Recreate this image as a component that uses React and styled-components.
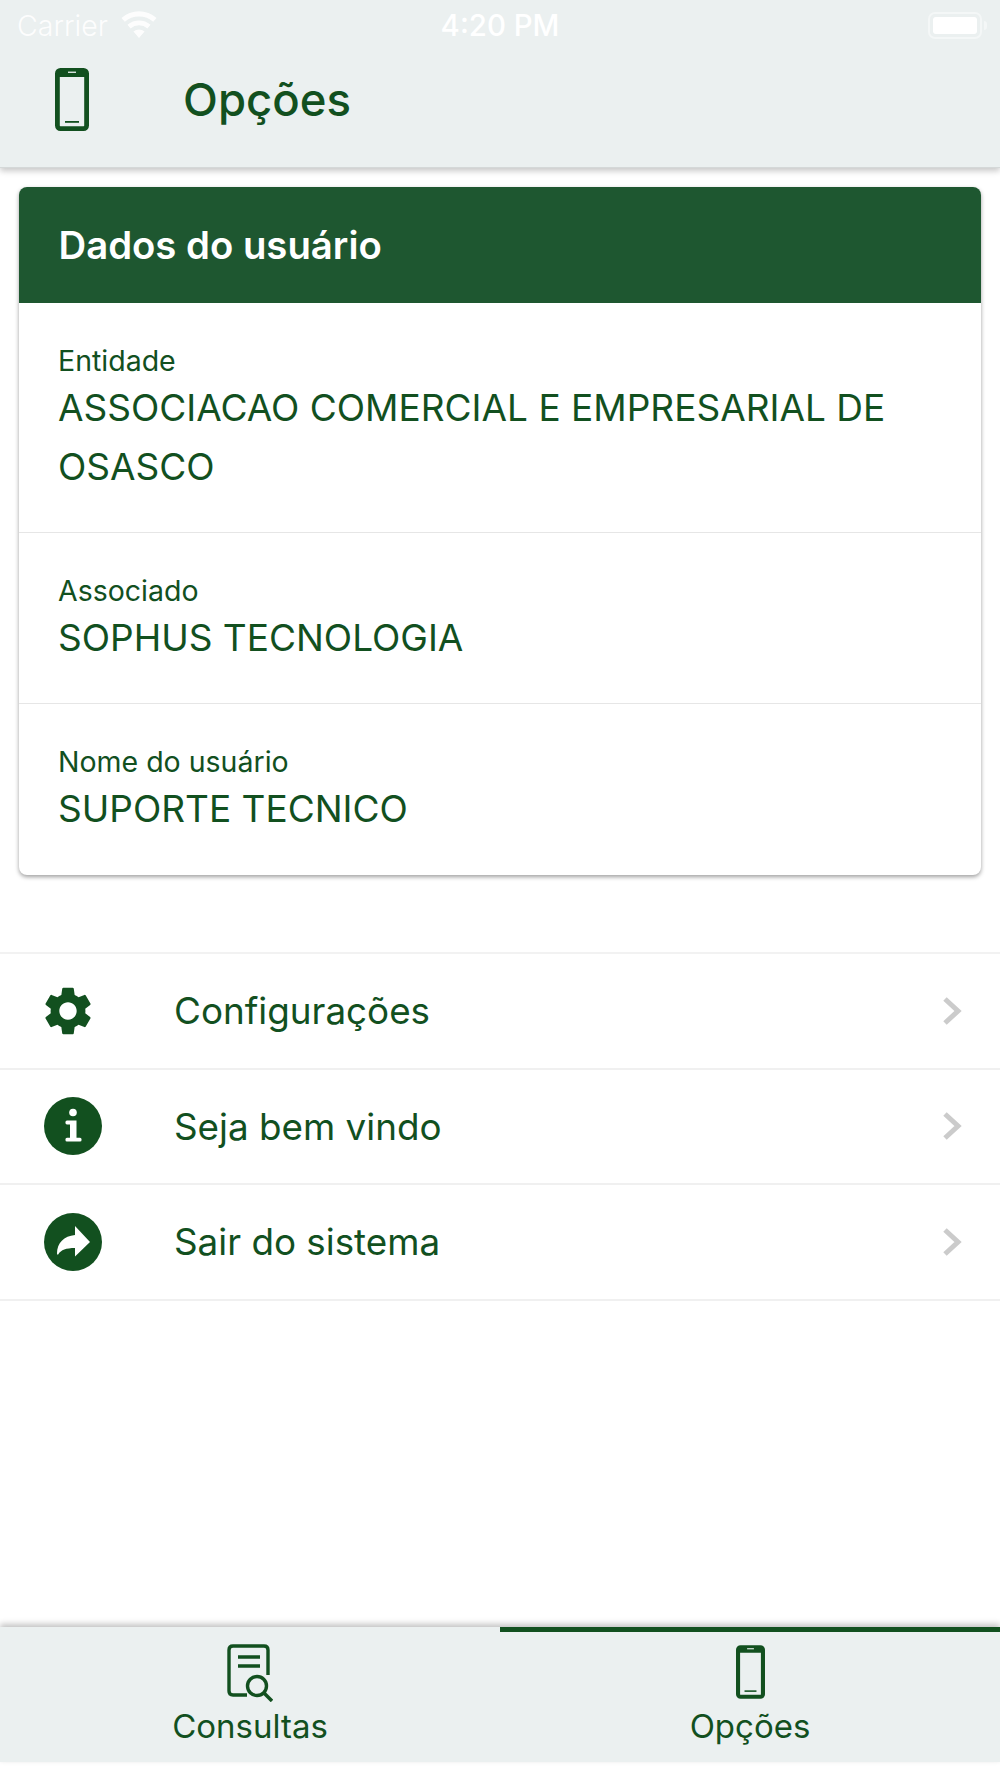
import React from "react";
import styled, { createGlobalStyle } from "styled-components";
import { MdSettings } from "react-icons/md";

const GREEN = "#12501f";

const GlobalStyle = createGlobalStyle`
  html, body {
    margin: 0;
    padding: 0;
    background: #fff;
    font-family: Inter, "Liberation Sans", sans-serif;
    color: ${GREEN};
  }
  * { box-sizing: border-box; }
`;

const Page = styled.div`
  width: 1000px;
  height: 1778px;
  display: flex;
  flex-direction: column;
  background: #fff;
`;

const Header = styled.header`
  height: 168px;
  flex: none;
  display: flex;
  flex-direction: column;
  background: #ebf0f0;
  border-bottom: 1px solid #d4d8d8;
  box-shadow: 0 3px 6px rgba(0, 0, 0, 0.22);
  position: relative;
`;

const StatusBar = styled.div`
  height: 50px;
  padding: 0 13px;
  display: grid;
  grid-template-columns: 1fr auto 1fr;
  align-items: center;
  color: #fff;
  font-size: 28.5px;
`;

const Carrier = styled.div`
  display: flex;
  align-items: center;
  gap: 12px;
  padding-left: 4px;
  font-weight: 300;
  opacity: 0.9;
`;

const Clock = styled.div`
  font-weight: 500;
  font-size: 29.4px;
`;

const Battery = styled.div`
  justify-self: end;
  display: flex;
  align-items: center;
  gap: 2px;
`;

const BatteryBody = styled.div`
  width: 54px;
  height: 27px;
  padding: 3px;
  border: 2px solid rgba(255, 255, 255, 0.45);
  border-radius: 7px;
  &::before {
    content: "";
    display: block;
    height: 100%;
    background: #fff;
    border-radius: 3px;
  }
`;

const BatteryCap = styled.div`
  width: 3px;
  height: 9px;
  background: rgba(255, 255, 255, 0.45);
  border-radius: 0 3px 3px 0;
`;

const TitleRow = styled.div`
  flex: 1;
  display: flex;
  align-items: center;
  padding: 0 0 19px 55px;
  gap: 94px;
`;

const Title = styled.h1`
  margin: 0;
  font-size: 45.5px;
  font-weight: 500;
  line-height: 1;
  position: relative;
  top: 1px;
`;

const Main = styled.main`
  flex: 1;
  display: flex;
  flex-direction: column;
  padding-top: 19px;
`;

const Card = styled.section`
  margin: 0 19px;
  border-radius: 8px;
  background: #fff;
  box-shadow: 0 2px 4px rgba(0, 0, 0, 0.38);
`;

const CardHeader = styled.h2`
  margin: 0;
  height: 116px;
  padding-left: 39.5px;
  display: flex;
  align-items: center;
  background: #1e5730;
  border-radius: 8px 8px 0 0;
  color: #fff;
  font-size: 38.3px;
  font-weight: 600;
`;

const Field = styled.div`
  padding: 41px 39px 36px;
  & + & {
    border-top: 1px solid #e6e6e6;
  }
  &:last-child {
    padding-bottom: 37px;
  }
`;

const FieldLabel = styled.div`
  font-size: 28.5px;
  line-height: 34px;
`;

const FieldValue = styled.div`
  font-size: 37px;
  line-height: 59px;
`;

const Menu = styled.nav`
  margin-top: 77px;
  border-top: 2px solid #f2f2f2;
`;

const MenuRow = styled.div`
  height: 115.5px;
  display: flex;
  align-items: center;
  padding: 0 38px 0 44px;
  border-bottom: 2px solid #f0f0f0;
`;

const MenuIcon = styled.div`
  width: 130px;
  flex: none;
  display: flex;
  align-items: center;
`;

const GearIcon = styled(MdSettings)`
  margin-left: -5px;
`;

const MenuLabel = styled.div`
  flex: 1;
  font-size: 36.8px;
`;

const TabBar = styled.footer`
  height: 135px;
  margin-bottom: 16px;
  flex: none;
  display: flex;
  background: #ebf0f0;
  box-shadow: 0 -3px 6px rgba(0, 0, 0, 0.24);
  position: relative;
`;

const Tab = styled.div`
  flex: 1;
  display: flex;
  flex-direction: column;
  align-items: center;
  padding-top: ${(p) => (p.$active ? "13px" : "17px")};
  border-top: ${(p) => (p.$active ? `5px solid ${GREEN}` : "none")};
`;

const TabIconBox = styled.div`
  height: ${(p) => (p.$active ? "55px" : "56px")};
  display: flex;
  align-items: flex-start;
`;

const TabLabel = styled.div`
  font-size: 33px;
  line-height: 38px;
  margin-top: 7px;
`;

function PhoneIcon({ width, height }) {
  return (
    <svg width={width} height={height} viewBox="0 0 34 63">
      <rect x="2.4" y="2.4" width="29.2" height="58.2" rx="3" fill="none" stroke={GREEN} strokeWidth="4.8" />
      <rect x="2" y="2" width="30" height="7" rx="2" fill={GREEN} />
      <rect x="13" y="3.6" width="8" height="1.3" fill="#ebf0f0" />
      <rect x="10" y="53" width="14" height="1.8" fill={GREEN} />
    </svg>
  );
}

function WifiIcon() {
  return (
    <svg width="38" height="28" viewBox="0 0 38 28" fill="#fff">
      <path d="M19 27 L13.4 20.6 A8.5 8.5 0 0 1 24.6 20.6 Z" />
      <path d="M10.6 17.4 L7.4 13.8 A17.6 17.6 0 0 1 30.6 13.8 L27.4 17.4 A13 13 0 0 0 10.6 17.4 Z" />
      <path d="M4.8 10.8 L1.4 7 A26.5 26.5 0 0 1 36.6 7 L33.2 10.8 A21.5 21.5 0 0 0 4.8 10.8 Z" />
    </svg>
  );
}

function InfoIcon() {
  return (
    <svg width="58" height="58" viewBox="0 0 58 58">
      <circle cx="29" cy="29" r="29" fill={GREEN} />
      <circle cx="29" cy="15.5" r="3.8" fill="#fff" />
      <path d="M23 23.5 H32.5 V40.8 H36 Q37.6 40.8 37.6 42.7 Q37.6 44.6 36 44.6 H23 Q21.4 44.6 21.4 42.7 Q21.4 40.8 23 40.8 H26 V27.4 H23 Q21.4 27.4 21.4 25.5 Q21.4 23.5 23 23.5 Z" fill="#fff" />
    </svg>
  );
}

function ShareIcon() {
  return (
    <svg width="58" height="58" viewBox="0 0 58 58">
      <circle cx="29" cy="29" r="29" fill={GREEN} />
      <path d="M31 13 L46 29 L31 43.5 V35 C22 35 17 37 14.5 41 C14 42 13 41.8 13 40.5 C13 30 20 23 31 22 Z" fill="#fff" />
    </svg>
  );
}

function Chevron() {
  return (
    <svg width="20" height="30" viewBox="0 0 20 30">
      <path d="M3 3 L16 15 L3 27" fill="none" stroke="#cbcbcb" strokeWidth="5" />
    </svg>
  );
}

function ConsultasIcon() {
  return (
    <svg width="46" height="58" viewBox="0 0 46 58" fill="none" stroke={GREEN} strokeWidth="3.4">
      <path d="M20 51 H6 Q2 51 2 47 V6 Q2 2 6 2 H37 Q41 2 41 6 V31" />
      <path d="M11 13 H33 M11 22 H33" />
      <circle cx="30" cy="42" r="9.5" />
      <path d="M37 49 L45 57" strokeWidth="3.5" />
    </svg>
  );
}

const fields = [
  { label: "Entidade", value: "ASSOCIACAO COMERCIAL E EMPRESARIAL DE OSASCO" },
  { label: "Associado", value: "SOPHUS TECNOLOGIA" },
  { label: "Nome do usuário", value: "SUPORTE TECNICO" },
];

const menuItems = [
  { label: "Configurações", icon: <GearIcon size={58} color={GREEN} /> },
  { label: "Seja bem vindo", icon: <InfoIcon /> },
  { label: "Sair do sistema", icon: <ShareIcon /> },
];

export default function App() {
  return (
    <Page>
      <GlobalStyle />
      <Header>
        <StatusBar>
          <Carrier>
            Carrier
            <WifiIcon />
          </Carrier>
          <Clock>4:20 PM</Clock>
          <Battery>
            <BatteryBody />
            <BatteryCap />
          </Battery>
        </StatusBar>
        <TitleRow>
          <PhoneIcon width={34} height={63} />
          <Title>Opções</Title>
        </TitleRow>
      </Header>
      <Main>
        <Card>
          <CardHeader>Dados do usuário</CardHeader>
          {fields.map((f) => (
            <Field key={f.label}>
              <FieldLabel>{f.label}</FieldLabel>
              <FieldValue>{f.value}</FieldValue>
            </Field>
          ))}
        </Card>
        <Menu>
          {menuItems.map((m) => (
            <MenuRow key={m.label}>
              <MenuIcon>{m.icon}</MenuIcon>
              <MenuLabel>{m.label}</MenuLabel>
              <Chevron />
            </MenuRow>
          ))}
        </Menu>
      </Main>
      <TabBar>
        <Tab>
          <TabIconBox>
            <ConsultasIcon />
          </TabIconBox>
          <TabLabel>Consultas</TabLabel>
        </Tab>
        <Tab $active>
          <TabIconBox $active>
            <PhoneIcon width={29} height={54} />
          </TabIconBox>
          <TabLabel>Opções</TabLabel>
        </Tab>
      </TabBar>
    </Page>
  );
}
